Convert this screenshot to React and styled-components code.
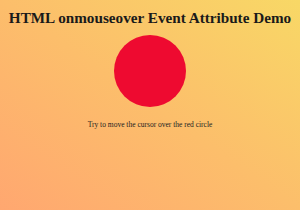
import React from "react";
import styled, { createGlobalStyle } from "styled-components";

const Global = createGlobalStyle`
  html, body { margin: 0; padding: 0; }
  body {
    width: 300px;
    height: 210px;
    overflow: hidden;
    font-family: "Liberation Serif", "Times New Roman", serif;
  }
`;

const Page = styled.div`
  width: 300px;
  height: 210px;
  box-sizing: border-box;
  background: linear-gradient(to top right, #ffa770 0%, #fcbe6b 50%, #f8d866 100%);
  display: flex;
  flex-direction: column;
  align-items: center;
  padding-top: 9px;
`;

const Title = styled.h1`
  margin: 0;
  font-size: 15.2px;
  font-weight: bold;
  color: #1a1a1a;
  white-space: nowrap;
`;

const Circle = styled.div`
  width: 72px;
  height: 72px;
  border-radius: 50%;
  background: #ee0a30;
  margin-top: 8px;
`;

const Hint = styled.p`
  margin: 13px 0 0;
  font-size: 7.5px;
  color: #222;
`;

export default function App() {
  return (
    <>
      <Global />
      <Page>
        <Title>HTML onmouseover Event Attribute Demo</Title>
        <Circle />
        <Hint>Try to move the cursor over the red circle</Hint>
      </Page>
    </>
  );
}
